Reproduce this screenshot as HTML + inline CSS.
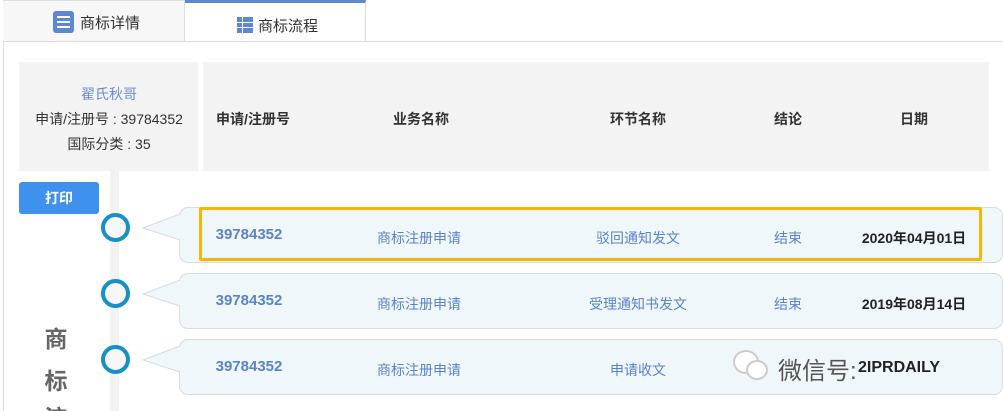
<!DOCTYPE html><html><head><meta charset="utf-8"><style>
*{margin:0;padding:0;box-sizing:border-box}
html,body{width:1003px;height:411px;overflow:hidden}
body{background:#fff;font-family:"Liberation Sans","Noto Sans CJK SC",sans-serif;position:relative}
.a{position:absolute}
.c{position:absolute;transform:translateX(-50%);white-space:nowrap}
</style></head><body>
<div class="a" style="left:3px;top:0;width:1px;height:411px;background:#ddd"></div>
<div class="a" style="left:3px;top:0;width:182px;height:41px;background:#f7f7f7;border-right:1px solid #ddd;border-top:1px solid #ddd"></div>
<div class="a" style="left:185px;top:0;width:181px;height:41px;background:#fff;border-top:3px solid #5b87d6;border-right:1px solid #ddd"></div>
<div class="a" style="left:3px;top:41px;width:1000px;height:1px;background:#ddd"></div>
<div class="a" style="left:53px;top:11px;width:21px;height:22px;background:#5b87d6;border-radius:3px"></div>
<div class="a" style="left:57px;top:16px;width:13px;height:2px;background:#fff;box-shadow:0 5px 0 #fff,0 10px 0 #fff"></div>
<div class="a" style="left:80px;top:12px;font-size:15px;color:#333">商标详情</div>
<div class="a" style="left:237px;top:17px;width:16px;height:16px;background:linear-gradient(#fff,#fff) 5px 0/1px 16px no-repeat,linear-gradient(#fff,#fff) 0 5px/16px 1px no-repeat,linear-gradient(#fff,#fff) 0 10px/16px 1px no-repeat,#5b87d6"></div>
<div class="a" style="left:258px;top:15px;font-size:15px;color:#333">商标流程</div>
<div class="a" style="left:19px;top:62px;width:179px;height:109px;background:#f3f3f3"></div>
<div class="a" style="left:203px;top:62px;width:786px;height:109px;background:#f3f3f3"></div>
<div class="c" style="left:109px;top:84px;font-size:14px;color:#6a8dcf">翟氏秋哥</div>
<div class="c" style="left:109px;top:109px;font-size:14px;color:#333">申请/注册号 : 39784352</div>
<div class="c" style="left:109px;top:134px;font-size:14px;color:#333">国际分类 : 35</div>
<div class="c" style="left:253px;top:109px;font-size:14px;font-weight:bold;color:#333">申请/注册号</div>
<div class="c" style="left:421px;top:109px;font-size:14px;font-weight:bold;color:#333">业务名称</div>
<div class="c" style="left:638px;top:109px;font-size:14px;font-weight:bold;color:#333">环节名称</div>
<div class="c" style="left:788px;top:109px;font-size:14px;font-weight:bold;color:#333">结论</div>
<div class="c" style="left:914px;top:109px;font-size:14px;font-weight:bold;color:#333">日期</div>
<div class="a" style="left:19px;top:182px;width:80px;height:32px;background:#3f91ee;border-radius:3px;color:#fff;font-weight:bold;font-size:14px;text-align:center;line-height:32px">打印</div>
<div class="a" style="left:110px;top:171px;width:9px;height:240px;background:#f2f2f2"></div>
<div class="a" style="left:30px;top:318px;width:52px;height:84px;font-size:23px;font-weight:bold;color:#666;line-height:42px;text-align:center">商<br>标</div>
<div class="a" style="left:30px;top:402px;width:52px;height:9px;overflow:hidden;font-size:23px;font-weight:bold;color:#666;line-height:32px;text-align:center">流</div>
<div class="a" style="left:179px;top:207px;width:824px;height:56px;background:#eff7fb;border:1px solid #d8dcdf;border-radius:9px"></div>
<div class="a" style="left:179px;top:273px;width:824px;height:56px;background:#eff7fb;border:1px solid #d8dcdf;border-radius:9px"></div>
<div class="a" style="left:179px;top:339px;width:824px;height:56px;background:#eff7fb;border:1px solid #d8dcdf;border-radius:9px"></div>
<svg class="a" style="left:140px;top:200px" width="42" height="200"><g fill="#eff7fb" stroke="#d8dcdf"><path d="M40 14 L3 28 L40 40"/><path d="M40 80 L3 94 L40 106"/><path d="M40 146 L3 160 L40 172"/></g></svg>
<div class="a" style="left:199px;top:207px;width:783px;height:54px;border:3px solid #f5b800;border-radius:2px"></div>
<div class="a" style="left:101px;top:213px;width:29px;height:29px;border:4px solid #1690c6;border-radius:50%;background:#f7f7f7"></div>
<div class="a" style="left:101px;top:279px;width:29px;height:29px;border:4px solid #1690c6;border-radius:50%;background:#f7f7f7"></div>
<div class="a" style="left:101px;top:345px;width:29px;height:29px;border:4px solid #1690c6;border-radius:50%;background:#f7f7f7"></div>
<div style="font-size:14px;color:#5b83cc">
<div class="c" style="left:249px;top:226px;font-weight:bold;font-size:15px">39784352</div>
<div class="c" style="left:419px;top:228px">商标注册申请</div>
<div class="c" style="left:638px;top:228px">驳回通知发文</div>
<div class="c" style="left:788px;top:228px">结束</div>
<div class="c" style="left:914px;top:228px;color:#222;font-weight:bold">2020年04月01日</div>
<div class="c" style="left:249px;top:292px;font-weight:bold;font-size:15px">39784352</div>
<div class="c" style="left:419px;top:294px">商标注册申请</div>
<div class="c" style="left:638px;top:294px">受理通知书发文</div>
<div class="c" style="left:788px;top:294px">结束</div>
<div class="c" style="left:914px;top:294px;color:#222;font-weight:bold">2019年08月14日</div>
<div class="c" style="left:249px;top:358px;font-weight:bold;font-size:15px">39784352</div>
<div class="c" style="left:419px;top:360px">商标注册申请</div>
<div class="c" style="left:638px;top:360px">申请收文</div>
</div>
<div class="a" style="left:733px;top:350px;width:26px;height:24px;border-radius:50%;border:2px solid #ccc;background:#fff"></div>
<div class="a" style="left:746px;top:360px;width:22px;height:20px;border-radius:50%;border:2px solid #ccc;background:#fff"></div>
<div class="a" style="left:778px;top:351px;font-size:24px;color:#555">微信号:</div>
<div class="a" style="left:858px;top:359px;font-size:16px;font-weight:bold;color:#222">2IPRDAILY</div>
</body></html>
